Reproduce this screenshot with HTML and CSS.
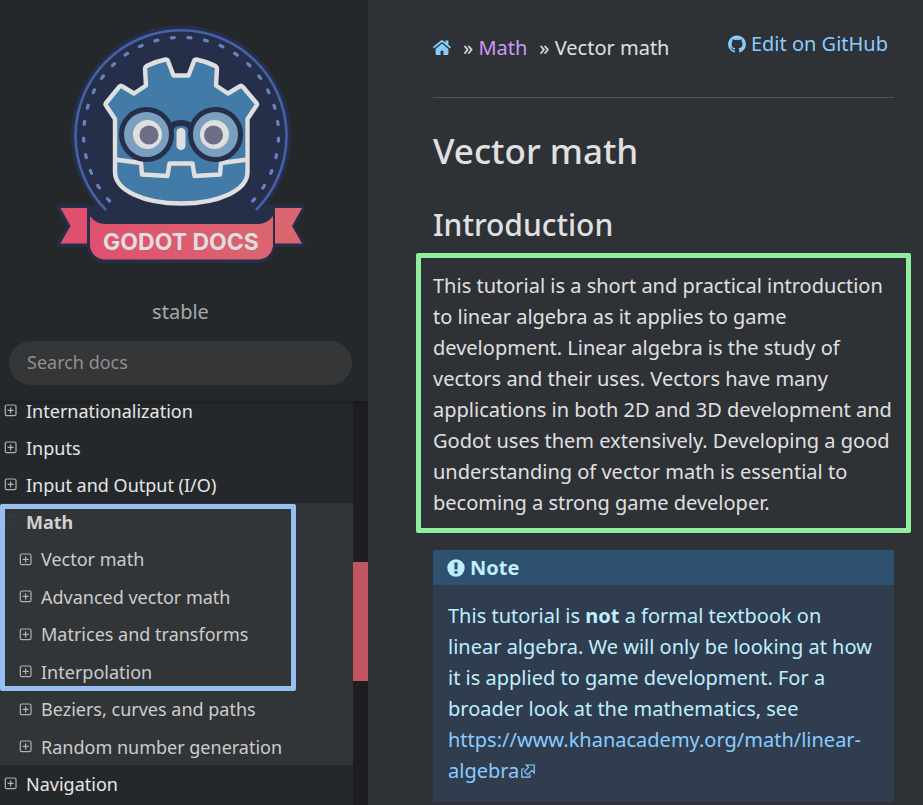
FILE: index.html
```html
<!DOCTYPE html>
<html lang="en">
<head>
<meta charset="utf-8">
<title>Vector math — Godot Docs</title>
<link rel="stylesheet" href="styles.css">
</head>
<body>
<svg class="sprite" aria-hidden="true">
  <symbol id="plus" viewBox="0 0 13 13"><rect x="1.300" y="1" width="10.700" height="10.700" rx="1.500" fill="none" stroke="currentColor" stroke-width="1.200"/><path d="M6.600 3.400v6M3.600 6.400h6" stroke="currentColor" stroke-width="1.200"/></symbol>
  <symbol id="minus" viewBox="0 0 13 13"><rect x="1.300" y="1" width="10.700" height="10.700" rx="1.500" fill="none" stroke="currentColor"/><path d="M3.600 6.400h6" stroke="currentColor"/></symbol>
</svg>
<div class="layout">
  <aside class="sidebar">
    <header class="side-head">
      <a class="logo" href="#" aria-label="Godot Docs">
        <svg viewBox="50 15 265 255">
          <defs>
            <linearGradient id="ribbon" gradientUnits="userSpaceOnUse" x1="90" y1="250" x2="272" y2="215"><stop offset="0" stop-color="#e0506e"/><stop offset="1" stop-color="#da6670"/></linearGradient>
          </defs>
          <circle cx="181" cy="135.500" r="110" fill="#262f4a"/>
          <path d="M105 190q-4 10-10 14.500H60q-5 1-2 6l9.500 15.500-9.500 15q-3 6 2 6h27q3 15 17 16h154q14-1 17-16h27q5 0 2-6l-9.500-15 9.500-15.500q3-5-2-6h-35q-6-4.500-10-14.500z" fill="#262f4a"/>
          <path d="M106 210A105.500 105.500 0 1 1 256 210" fill="none" stroke="#4860a8" stroke-width="2.600"/>
          <path d="M109.500 201A97.500 97.500 0 1 1 252.700 201" fill="none" stroke="#6882c4" stroke-width="3.200" stroke-linecap="round" stroke-dasharray="3 13.600"/>
          <path d="M60.500 208H87v35.500H60.500L70.500 226z" fill="#e0506e"/>
          <path d="M275 208h27L292 226l10 17.500h-27z" fill="#da6670"/>
          <path d="M90 216q6 8 15 8h153q9 0 15-8v30q-2 12-14 13.500H104Q92 258 90 246z" fill="url(#ribbon)"/>
          <path d="M115 119l-9-13.500q-1-1 0-2.500l13.500-16.500q1.500-1.500 3 0l11.500 7 12-8-1-17q0-1.500 1.500-2.500 9-4.500 19-6.500 2 0 2.500 1.500l5.500 14.500h15l5.500-14.500q.5-1.500 2.500-1.500 10 2 19 6.500 1.500 1 1.500 2.500l-1 17 12 8 11.500-7q1.500-1.500 3 0L256.500 103q1 1.500 0 2.500L247.500 119v53c0 18-28 31.500-66.250 31.500S115 190 115 172z" fill="#427ba7" stroke="#dfdfdf" stroke-width="4.400" stroke-linejoin="round"/>
          <path d="M115 159.500l26 3.500 1 11.500 25.500 1.500 2-12.500h23l2 12.500 25.500-1.500 1-11.500 26.500-3.500" fill="none" stroke="#dfdfdf" stroke-width="4.400" stroke-linejoin="round"/>
          <path d="M170 131q1-8 11-8t11 8" fill="none" stroke="#262f4a" stroke-width="6"/>
          <circle cx="146.500" cy="134.500" r="25" fill="#7ba0bf" stroke="#262f4a" stroke-width="5"/><circle cx="215.500" cy="134.500" r="25" fill="#7ba0bf" stroke="#262f4a" stroke-width="5"/>
          <circle cx="147.500" cy="134.500" r="14.500" fill="#dfdfdf"/><circle cx="214.500" cy="134.500" r="14.500" fill="#dfdfdf"/>
          <circle cx="149" cy="135" r="9.500" fill="#6e6f86"/><circle cx="213.500" cy="135" r="9.500" fill="#6e6f86"/>
          <rect x="176.500" y="128" width="9" height="22" rx="4.500" fill="#dfdfdf"/>
          <text x="181" y="249.500" text-anchor="middle" class="logo-text">GODOT DOCS</text>
        </svg>
      </a>
      <div class="version">stable</div>
      <input class="search" type="text" placeholder="Search docs" aria-label="Search docs">
    </header>
    <div class="menu-scroll">
      <nav class="menu" aria-label="Documentation">
        <ul>
          <li><a href="#"><svg><use href="#plus"/></svg>Internationalization</a></li>
          <li><a href="#"><svg><use href="#plus"/></svg>Inputs</a></li>
          <li><a href="#"><svg><use href="#plus"/></svg>Input and Output (I/O)</a></li>
          <li class="current"><a href="#"><svg><use href="#minus"/></svg>Math</a>
            <ul>
              <li><a href="#"><svg><use href="#plus"/></svg>Vector math</a></li>
              <li><a href="#"><svg><use href="#plus"/></svg>Advanced vector math</a></li>
              <li><a href="#"><svg><use href="#plus"/></svg>Matrices and transforms</a></li>
              <li><a href="#"><svg><use href="#plus"/></svg>Interpolation</a></li>
              <li><a href="#"><svg><use href="#plus"/></svg>Beziers, curves and paths</a></li>
              <li><a href="#"><svg><use href="#plus"/></svg>Random number generation</a></li>
            </ul>
            <div class="mark mark-blue"></div>
          </li>
          <li><a href="#"><svg><use href="#plus"/></svg>Navigation</a></li>
        </ul>
      </nav>
      <div class="track"><div class="thumb"></div></div>
    </div>
  </aside>
  <main class="content">
    <div class="topbar">
      <nav class="crumbs" aria-label="Breadcrumb">
        <a href="#" aria-label="Home"><svg class="home" viewBox="0 0 18 15"><path d="M9 3.600L2.600 8.900V14q0 1 1 1h4v-4.300h2.800V15h4q1 0 1-1V8.900zM9 0q.6 0 1.100.4l2.400 2V.6h2.900v4.200L18 7.100l-1 1.300L9 2 1 8.400 0 7.100 7.900.4Q8.400 0 9 0z" fill="currentColor"/></svg></a>
        <span>» <a class="visited" href="#">Math</a></span>
        <span>» Vector math</span>
      </nav>
      <a class="edit" href="#"><svg viewBox="0 0 18 18"><path d="M9 .4a8.700 8.700 0 0 0-2.800 17c.5.100.6-.2.600-.4v-1.700c-2 .4-2.700-.5-2.900-1-.3-.5-.5-.8-.9-1.100-.3-.2-.8-.6 0-.6.700 0 1.200.6 1.400.9.800 1.300 2 1 2.500.8.100-.6.300-1 .6-1.200-2-.2-3.900-1-3.900-4.200 0-1 .3-1.700.9-2.300-.1-.3-.4-1.200.1-2.400 0 0 .7-.2 2.400.9q2-.5 4.200 0c1.600-1.100 2.300-.9 2.300-.9.500 1.200.2 2.100.1 2.400.6.600.9 1.400.9 2.300 0 3.300-2 4-3.900 4.200.3.300.6.800.6 1.700V17c0 .3.200.5.600.4A8.700 8.700 0 0 0 9 .4z" fill="currentColor"/></svg>Edit on GitHub</a>
    </div>
    <hr>
    <h1>Vector math</h1>
    <h2>Introduction</h2>
    <div class="intro">
      <p>This tutorial is a short and practical introduction to linear algebra as it applies to game development. Linear algebra is the study of vectors and their uses. Vectors have many applications in both 2D and 3D development and Godot uses them extensively. Developing a good understanding of vector math is essential to becoming a strong game developer.</p>
    </div>
    <section class="note">
      <h3><svg viewBox="0 0 18 18"><circle cx="9" cy="9" r="8.700" fill="currentColor"/><path d="M7.300 3.500h3.400l-.3 7H7.600zM7.500 12h3v2.700h-3z" class="bang"/></svg>Note</h3>
      <p>This tutorial is <strong>not</strong> a formal textbook on linear algebra. We will only be looking at how it is applied to game development. For a broader look at the mathematics, see <a href="#">https://www.khanacademy.org/math/linear-algebra<svg viewBox="0 0 14 14"><path d="M3.500 5H.8v8.200H9v-2.700M5.200 1h8v7.800l-2.300-2.200-4.400 4-3-3 4-4.300z" fill="none" stroke="currentColor" stroke-width="1.200"/></svg></a></p>
    </section>
  </main>
</div>
</body>
</html>
```
FILE: styles.css
```css
* { box-sizing: border-box; }
body {
  margin: 0;
  background: #2e3136;
  color: #e0e0e0;
  font: 20px/31px "Noto Sans", sans-serif;
}
a { color: #8cf; text-decoration: none; }
ul { list-style: none; margin: 0; padding: 0; }
.sprite { display: none; }
.layout { display: grid; grid-template-columns: 368px minmax(0, 1fr); height: 100vh; overflow: hidden; }

.sidebar { display: flex; flex-direction: column; min-height: 0; overflow: hidden; background: #25282b; }
.side-head {
  display: flex;
  flex-direction: column;
  padding: 15px 16px 16px 9px;
  box-shadow: 0 0 6px rgba(0, 0, 0, .4);
  z-index: 1;
}
.logo { display: flex; justify-content: center; padding-left: 4px; }
.logo svg { width: 265px; height: 255px; }
.logo-text { font: 700 23px Inter, sans-serif; fill: #dfdfdf; }
.version { margin: 26px 0 14px; text-align: center; color: #a6a8aa; }
.search {
  width: 100%;
  height: 44px;
  padding: 0 18px 2px;
  border: 0;
  border-radius: 22px;
  background: #353638;
  color: #e0e0e0;
  font: 18px "Noto Sans", sans-serif;
}
.search::placeholder { color: #8f9092; opacity: 1; }
.menu-scroll { display: flex; flex: 1; min-height: 0; overflow: hidden; }
.menu { flex: 1; margin-top: -9px; font-size: 18px; line-height: 18px; }
.menu a { display: flex; align-items: center; gap: 9px; height: 37px; padding-left: 4px; color: #e6e6e6; }
.menu svg { width: 13px; height: 13px; color: #b0b2b4; }
.current { position: relative; background: #323537; }
.menu .current > a { color: #d0d0d0; font-weight: 700; }
.menu .current > a svg { color: #3b3d3e; }
.menu .current ul a { padding-left: 19px; color: #ccc; }
.menu .current li:nth-child(odd) a { height: 38px; }
.mark { position: absolute; border: 5px solid; border-radius: 2px; pointer-events: none; }
.mark-blue { top: 1px; left: 0; width: 296px; height: 187px; border-color: #97bff2; }
.track { width: 15px; padding-top: 161px; background: #1d1e21; }
.thumb { height: 119px; background: #c15560; }

.content { padding: 28px 29px 0 65px; }
.topbar { display: flex; justify-content: space-between; align-items: flex-start; padding-right: 6px; }
.crumbs { display: flex; gap: 12px; padding-top: 4px; }
.home { width: 18px; height: 15px; }
.crumbs .visited { color: #cb99f6; }
.edit { display: flex; align-items: center; gap: 5px; }
.edit svg { width: 18px; height: 18px; }
hr { margin: 34px 0 32px; border: 0; border-top: 1px solid #505355; }
h1 { margin: 0 0 32px; font-size: 35px; line-height: 42px; font-weight: 500; }
h2 { margin: 0 0 7px; font-size: 30px; line-height: 42px; font-weight: 500; }
.intro { margin: 0 -17px 17px; padding: 12px 12px 10px; border: 5px solid #91ee9f; border-radius: 2px; }
p { margin: 0; }
.note { padding-bottom: 16px; background: #303d4f; color: #bfeeff; }
.note h3 { display: flex; align-items: center; gap: 5px; margin: 0 0 15px; padding: 2px 14px; background: #2e5170; font-size: 20px; }
.note h3 svg { width: 18px; height: 18px; }
.bang { fill: #2e5170; }
.note p { padding: 0 15px; }
.note p svg { width: 14px; height: 14px; margin-left: 2px; }
```
